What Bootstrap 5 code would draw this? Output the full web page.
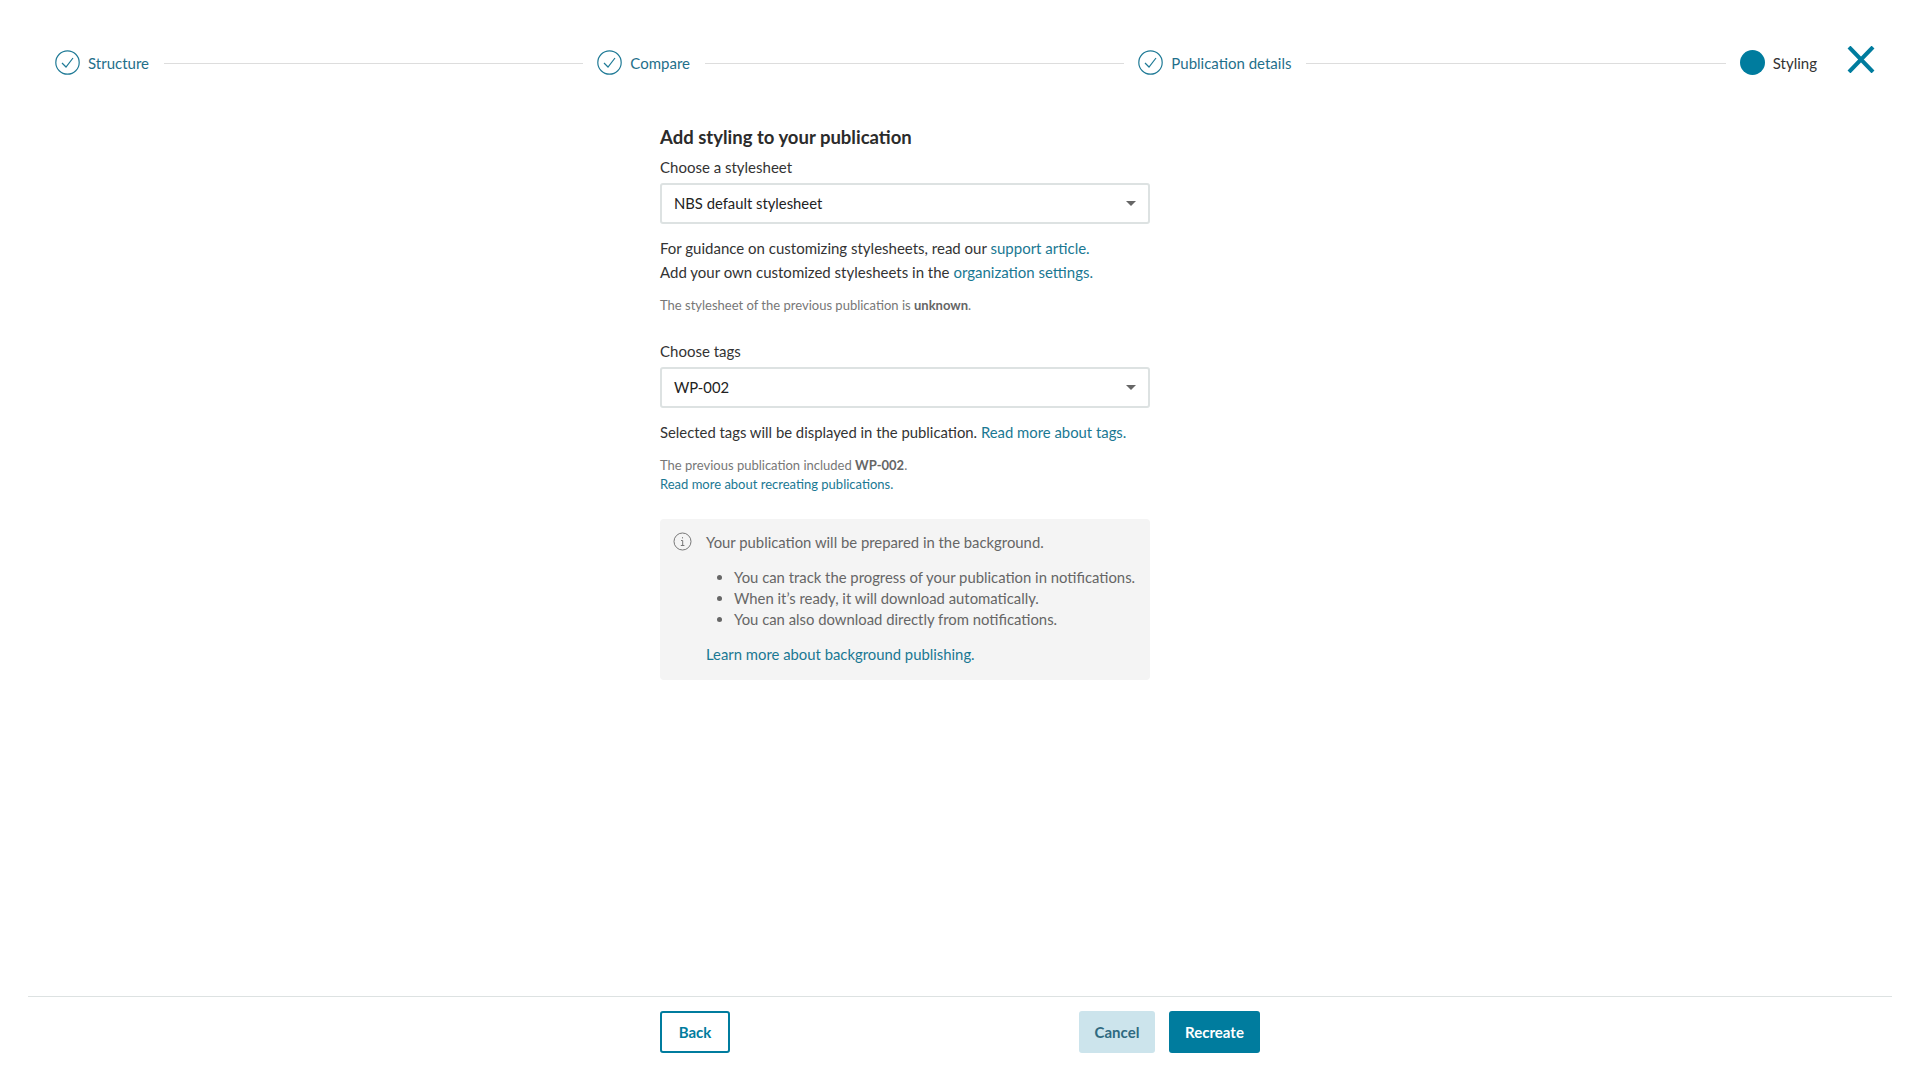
<!DOCTYPE html>
<html lang="en">
<head>
    <meta charset="UTF-8">
    <meta name="viewport" content="width=device-width, initial-scale=1.0">
    <title>Add styling</title>
    <link href="https://cdn.jsdelivr.net/npm/bootstrap@5.3.0/dist/css/bootstrap.min.css" rel="stylesheet">
    <script src="https://cdn.jsdelivr.net/npm/bootstrap@5.3.0/dist/js/bootstrap.bundle.min.js"></script>
    <style>
        html, body {
            height: 100%;
        }
        body {
            font-family: "Lato", "Liberation Sans", sans-serif;
            font-size: 15px;
            color: #333;
            background: #fff;
        }
        a {
            color: #1a7893;
            text-decoration: none;
        }
        .page-wrap {
            height: 1080px;
        }
        .stepper {
            padding: 50px 45px 0 55px;
            height: 125px;
        }
        .step-row {
            height: 25px;
        }
        .step-label {
            color: #1f6f8b;
            font-size: 15px;
            line-height: 24px;
            white-space: nowrap;
        }
        .step-label.current {
            color: #333;
        }
        .step-icon {
            width: 25px;
            height: 25px;
            flex: none;
        }
        .step-dot {
            width: 25px;
            height: 25px;
            flex: none;
            border-radius: 50%;
            background: #007c9e;
        }
        .step-line {
            flex: 1 1 0;
            height: 1px;
            background: #ddd;
            margin: 1px 14px 0 15px;
        }
        .close-x {
            width: 28px;
            height: 27px;
            margin-left: 30px;
            margin-top: -6px;
            flex: none;
        }
        .pane {
            width: 490px;
            margin-left: 660px;
        }
        .pane-title {
            font-size: 18.5px;
            font-weight: 700;
            line-height: 24px;
            color: #2b2b2b;
            margin-bottom: 8px;
        }
        .pick-label {
            line-height: 20px;
            margin-bottom: 6px;
        }
        .pick-label-next {
            margin-top: 26px;
        }
        .pick {
            height: 41px;
            border: 2px solid #dde2e2;
            border-radius: 3px;
            padding: 0 12px;
            color: #222;
            font-size: 14.8px;
        }
        .pick-caret {
            width: 0;
            height: 0;
            border-left: 5px solid transparent;
            border-right: 5px solid transparent;
            border-top: 5px solid #666;
        }
        .hint {
            line-height: 24px;
        }
        .hint-first {
            margin-top: 12px;
        }
        .hint-tags {
            font-size: 14.85px;
        }
        .fine {
            font-size: 13px;
            line-height: 19px;
            color: #777;
            margin-top: 12px;
        }
        .fine b {
            color: #666;
        }
        .notice {
            background: #f4f4f4;
            border-radius: 4px;
            color: #666;
            font-size: 14.85px;
            height: 161px;
            padding: 13px 8px 0 13px;
            margin-top: 25px;
        }
        .notice-icon {
            width: 19px;
            height: 19px;
            flex: none;
            margin-right: 14px;
        }
        .notice ul {
            margin: 14px 0 14px;
            padding-left: 28px;
        }
        .notice li {
            line-height: 21px;
        }
        .notice p {
            line-height: 21px;
            margin: 0;
        }
        .foot {
            border-top: 1px solid #dde2e2;
            margin: 0 28px;
            padding-top: 14px;
            height: 84px;
        }
        .foot-inner {
            width: 600px;
            margin-left: 632px;
        }
        .act {
            height: 42px;
            font-size: 15px;
            font-weight: 700;
            border-radius: 3px;
            padding: 0;
        }
        .act-back {
            width: 70px;
            border: 2px solid #007c9e;
            background: #fff;
            color: #007c9e;
            margin-right: 349px;
        }
        .act-cancel {
            width: 76px;
            border: 0;
            background: #cce4ec;
            color: #2f6a80;
            margin-right: 14px;
        }
        .act-go {
            width: 91px;
            border: 0;
            background: #007c9e;
            color: #fff;
        }
    </style>
</head>
<body>
    <div class="page-wrap d-flex flex-column">
        <div class="stepper">
            <div class="step-row d-flex align-items-center">
                <svg class="step-icon" viewBox="0 0 25 25"><circle cx="12.5" cy="12.5" r="11.7" fill="none" stroke="#1f7a96" stroke-width="1.2"/><path d="M7 13l4 4 7-9" fill="none" stroke="#1f7a96" stroke-width="1.2"/></svg>
                <span class="step-label ms-2">Structure</span>
                <div class="step-line"></div>
                <svg class="step-icon" viewBox="0 0 25 25"><circle cx="12.5" cy="12.5" r="11.7" fill="none" stroke="#1f7a96" stroke-width="1.2"/><path d="M7 13l4 4 7-9" fill="none" stroke="#1f7a96" stroke-width="1.2"/></svg>
                <span class="step-label ms-2">Compare</span>
                <div class="step-line"></div>
                <svg class="step-icon" viewBox="0 0 25 25"><circle cx="12.5" cy="12.5" r="11.7" fill="none" stroke="#1f7a96" stroke-width="1.2"/><path d="M7 13l4 4 7-9" fill="none" stroke="#1f7a96" stroke-width="1.2"/></svg>
                <span class="step-label ms-2">Publication details</span>
                <div class="step-line"></div>
                <div class="step-dot"></div>
                <span class="step-label current ms-2">Styling</span>
                <svg class="close-x" viewBox="0 0 28 27"><path d="M2 1l24 25M26 1L2 26" fill="none" stroke="#007c9e" stroke-width="4"/></svg>
            </div>
        </div>

        <div class="pane flex-grow-1">
            <div class="pane-title">Add styling to your publication</div>
            <div class="pick-label">Choose a stylesheet</div>
            <div class="pick d-flex align-items-center justify-content-between">
                <span>NBS default stylesheet</span>
                <span class="pick-caret"></span>
            </div>
            <div class="hint hint-first">For guidance on customizing stylesheets, read our <a href="#">support article.</a></div>
            <div class="hint">Add your own customized stylesheets in the <a href="#">organization settings.</a></div>
            <div class="fine">The stylesheet of the previous publication is <b>unknown</b>.</div>

            <div class="pick-label pick-label-next">Choose tags</div>
            <div class="pick d-flex align-items-center justify-content-between">
                <span>WP-002</span>
                <span class="pick-caret"></span>
            </div>
            <div class="hint hint-first hint-tags">Selected tags will be displayed in the publication. <a href="#">Read more about tags.</a></div>
            <div class="fine">The previous publication included <b>WP-002</b>.<br><a href="#">Read more about recreating publications.</a></div>

            <div class="notice d-flex">
                <svg class="notice-icon" viewBox="0 0 19 19"><circle cx="9.5" cy="9.5" r="8.5" fill="none" stroke="#777" stroke-width="1"/><path d="M8 8.5h1.7v5M7.8 13.5h3.6M9.5 5.2v1.2" fill="none" stroke="#777" stroke-width="1"/></svg>
                <div>
                    <p>Your publication will be prepared in the background.</p>
                    <ul>
                        <li>You can track the progress of your publication in notifications.</li>
                        <li>When it’s ready, it will download automatically.</li>
                        <li>You can also download directly from notifications.</li>
                    </ul>
                    <p><a href="#">Learn more about background publishing.</a></p>
                </div>
            </div>
        </div>

        <div class="foot">
            <div class="foot-inner d-flex">
                <button class="act act-back" type="button">Back</button>
                <button class="act act-cancel" type="button">Cancel</button>
                <button class="act act-go" type="button">Recreate</button>
            </div>
        </div>
    </div>
</body>
</html>
